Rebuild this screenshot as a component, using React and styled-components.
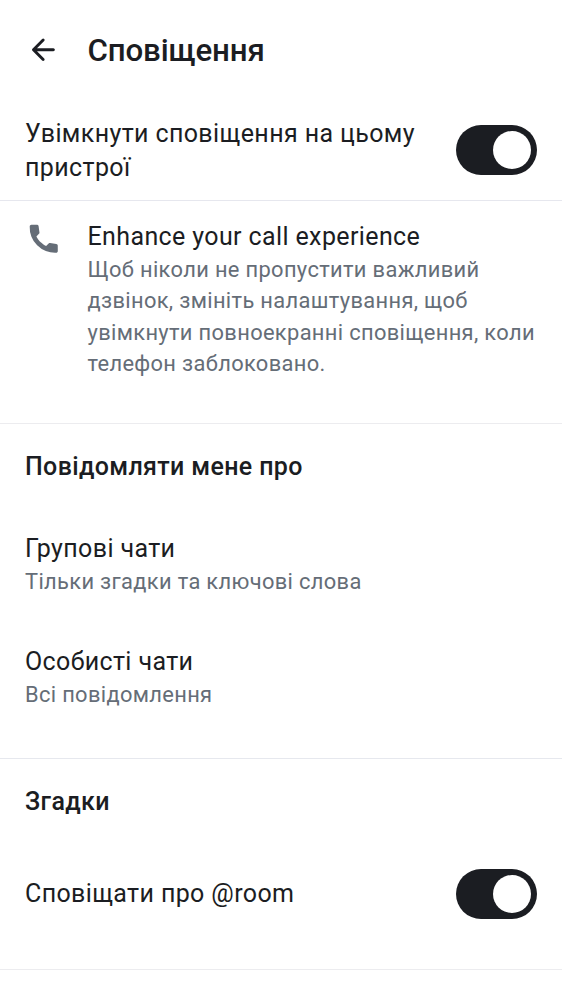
import React from 'react';
import styled, { createGlobalStyle } from 'styled-components';

const Global = createGlobalStyle`
  * { box-sizing: border-box; }
  body { margin: 0; background: #fff; }
  h1, h2, p { margin: 0; }
`;

const Screen = styled.main`
  width: 562px;
  height: 1000px;
  overflow: hidden;
  display: flex;
  flex-direction: column;
  background: #fff;
  color: #1b1d22;
  font-family: Roboto, 'Liberation Sans', sans-serif;
`;

const TopBar = styled.header`
  flex: none;
  height: 100px;
  padding: 0 25px;
  display: flex;
  align-items: center;
  gap: 25px;
`;

const BackButton = styled.button`
  display: flex;
  padding: 0;
  border: 0;
  background: none;
  color: inherit;
`;

const Icon = styled.svg`
  flex: none;
  display: block;
  width: 37.5px;
  height: 37.5px;
  fill: ${(p) => p.$color || 'currentColor'};
`;

const PageTitle = styled.h1`
  font-size: 31.25px;
  line-height: 39px;
  font-weight: 500;
  letter-spacing: -0.15px;
`;

const Section = styled.section`
  flex: none;
  height: ${(p) => p.$height}px;
  border-bottom: 1px solid ${(p) => p.$line || '#ececef'};
`;

const SwitchRow = styled.div`
  height: ${(p) => p.$height}px;
  padding: 0 25px;
  display: flex;
  align-items: center;
  justify-content: space-between;
`;

const Label = styled.p`
  font-size: 25px;
  line-height: 34px;
  letter-spacing: 0.38px;
  white-space: pre-line;
`;

const Description = styled.p`
  font-size: 21.875px;
  line-height: 31.25px;
  letter-spacing: 0.34px;
  white-space: pre-line;
  color: #656d77;
`;

const Track = styled.button`
  flex: none;
  width: 81px;
  height: 50px;
  margin-bottom: ${(p) => p.$lift || 0}px;
  padding: 0 6px;
  border: 0;
  border-radius: 25px;
  background: #1b1d22;
  display: flex;
  align-items: center;
  justify-content: flex-end;
`;

const Thumb = styled.span`
  width: 38px;
  height: 38px;
  border-radius: 50%;
  background: #fff;
`;

const CallBanner = styled.div`
  display: flex;
  align-items: flex-start;
  gap: 25px;
  padding: 19px 0 0 25px;
`;

const Heading = styled.h2`
  padding: 26px 25px 0;
  font-size: 25px;
  line-height: 34px;
  font-weight: 500;
  letter-spacing: 0.36px;
`;

const Option = styled.div`
  padding: 48px 25px 0;
`;

function Switch({ label, lift }) {
  return (
    <Track role="switch" aria-checked="true" aria-label={label} $lift={lift}>
      <Thumb />
    </Track>
  );
}

export default function App() {
  return (
    <Screen>
      <Global />
      <TopBar>
        <BackButton aria-label="Назад">
          <Icon viewBox="-0.8 -0.8 25.6 25.6">
            <path d="m10.875 19.3-6.6-6.6a.9.9 0 0 1-.213-.325A1.1 1.1 0 0 1 4 12q0-.2.063-.375a.9.9 0 0 1 .212-.325l6.6-6.6a.98.98 0 0 1 .712-.3q.438 0 .713.3.3.275.3.7t-.3.7L7.4 11h11.175q.425 0 .713.287.287.288.287.713t-.287.713q-.288.287-.713.287H7.4l4.9 4.9q.275.275.287.687a.93.93 0 0 1-.287.713q-.275.3-.7.3a.98.98 0 0 1-.725-.3" />
          </Icon>
        </BackButton>
        <PageTitle>Сповіщення</PageTitle>
      </TopBar>
      <Section $height={101} $line="#e6e7ee">
        <SwitchRow $height={101}>
          <Label>{'Увімкнути сповіщення на цьому\nпристрої'}</Label>
          <Switch label="Увімкнути сповіщення" lift={1} />
        </SwitchRow>
      </Section>
      <Section $height={223}>
        <CallBanner>
          <Icon viewBox="0 0 24 24" $color="#656d77">
            <path d="m20.958 16.374.039 3.527q0 .427-.33.756-.33.33-.756.33a15.97 15.97 0 0 1-6.57-1.105 16.2 16.2 0 0 1-5.563-3.663 16.1 16.1 0 0 1-3.653-5.573 16.3 16.3 0 0 1-1.115-6.56q0-.427.33-.757.329-.33.755-.329l3.528.039a1.07 1.07 0 0 1 1.085.93l.543 3.954q.039.271-.039.504a1.1 1.1 0 0 1-.271.426l-1.64 1.64q.505 1.008 1.154 1.909c.433.6 1.444 1.696 1.444 1.696s1.095 1.01 1.696 1.444q.9.65 1.909 1.153l1.64-1.64q.193-.193.426-.27t.504-.04l3.954.543q.406.059.668.359t.262.727" />
          </Icon>
          <div>
            <Label>Enhance your call experience</Label>
            <Description>{'Щоб ніколи не пропустити важливий\nдзвінок, змініть налаштування, щоб\nувімкнути повноекранні сповіщення, коли\nтелефон заблоковано.'}</Description>
          </div>
        </CallBanner>
      </Section>
      <Section $height={335} $line="#e6e8ee">
        <Heading>Повідомляти мене про</Heading>
        <Option>
          <Label>Групові чати</Label>
          <Description>Тільки згадки та ключові слова</Description>
        </Option>
        <Option>
          <Label>Особисті чати</Label>
          <Description>Всі повідомлення</Description>
        </Option>
      </Section>
      <Section $height={211}>
        <Heading>Згадки</Heading>
        <SwitchRow $height={149}>
          <Label>Сповіщати про @room</Label>
          <Switch label="Сповіщати про @room" />
        </SwitchRow>
      </Section>
    </Screen>
  );
}
